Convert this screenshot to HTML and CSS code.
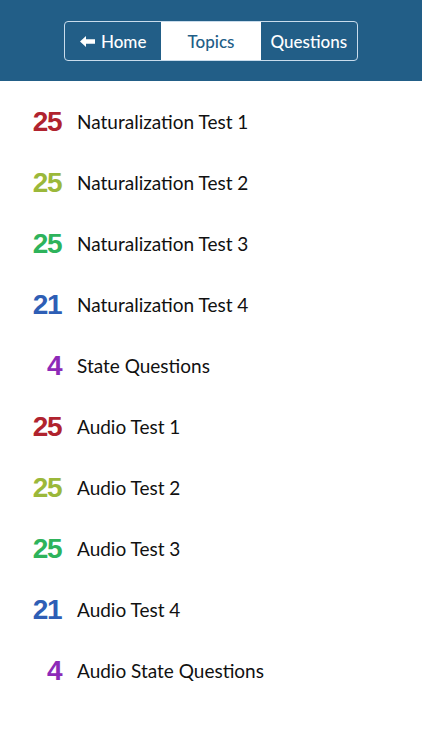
FILE: index.html
```html
<!DOCTYPE html>
<html>
<head>
<meta charset="utf-8">
<link rel="stylesheet" href="styles.css">
</head>
<body>
<header class="topbar">
  <nav class="seg">
    <div class="seg-item">
      <svg class="arrow" viewBox="0 0 15 11" width="15" height="11"><path d="M0 5.5 L6 0 L6 3.3 L15 3.3 L15 7.7 L6 7.7 L6 11 Z" fill="#fff"/></svg>
      <span>Home</span>
    </div>
    <div class="seg-item active"><span>Topics</span></div>
    <div class="seg-item"><span>Questions</span></div>
  </nav>
</header>
<ul class="list">
  <li class="row"><span class="num red">25</span><span class="label">Naturalization Test 1</span></li>
  <li class="row"><span class="num lime">25</span><span class="label">Naturalization Test 2</span></li>
  <li class="row"><span class="num green">25</span><span class="label">Naturalization Test 3</span></li>
  <li class="row"><span class="num blue">21</span><span class="label">Naturalization Test 4</span></li>
  <li class="row"><span class="num purple">4</span><span class="label">State Questions</span></li>
  <li class="row"><span class="num red">25</span><span class="label">Audio Test 1</span></li>
  <li class="row"><span class="num lime">25</span><span class="label">Audio Test 2</span></li>
  <li class="row"><span class="num green">25</span><span class="label">Audio Test 3</span></li>
  <li class="row"><span class="num blue">21</span><span class="label">Audio Test 4</span></li>
  <li class="row"><span class="num purple">4</span><span class="label">Audio State Questions</span></li>
</ul>
</body>
</html>
```
FILE: styles.css
```css
* { box-sizing: border-box; }
html, body { margin: 0; padding: 0; background: #fff; }
body { font-family: "Lato", "Noto Sans", sans-serif; width: 422px; }

.topbar {
  background: #225e87;
  height: 81px;
  display: flex;
  justify-content: center;
  align-items: flex-start;
  padding-top: 21px;
}
.seg {
  display: flex;
  width: 294px;
  height: 40px;
  border: 1px solid #c9dcec;
  border-radius: 4px;
  overflow: hidden;
}
.seg-item {
  flex: 97 1 0;
  display: flex;
  align-items: center;
  justify-content: center;
  gap: 6px;
  color: #fff;
  font-size: 17px;
  font-weight: 500;
}
.seg-item.active {
  flex: 100 1 0;
  background: #fff;
  color: #225e87;
}
.arrow { display: block; }

.list {
  list-style: none;
  margin: 0;
  padding: 10px 0 0 0;
}
.row {
  height: 61px;
  display: flex;
  align-items: center;
}
.num {
  width: 62px;
  text-align: right;
  padding-right: 1px;
  font-family: "Liberation Sans", sans-serif;
  font-weight: 700;
  font-size: 28px;
  letter-spacing: -1.5px;
  line-height: 1;
}
.label {
  margin-left: 15px;
  font-size: 19px;
  color: #111;
}
.red { color: #b0232e; }
.lime { color: #9bb83a; }
.green { color: #2eb35b; }
.blue { color: #2e5eb5; }
.purple { color: #8d2ab8; }
```
